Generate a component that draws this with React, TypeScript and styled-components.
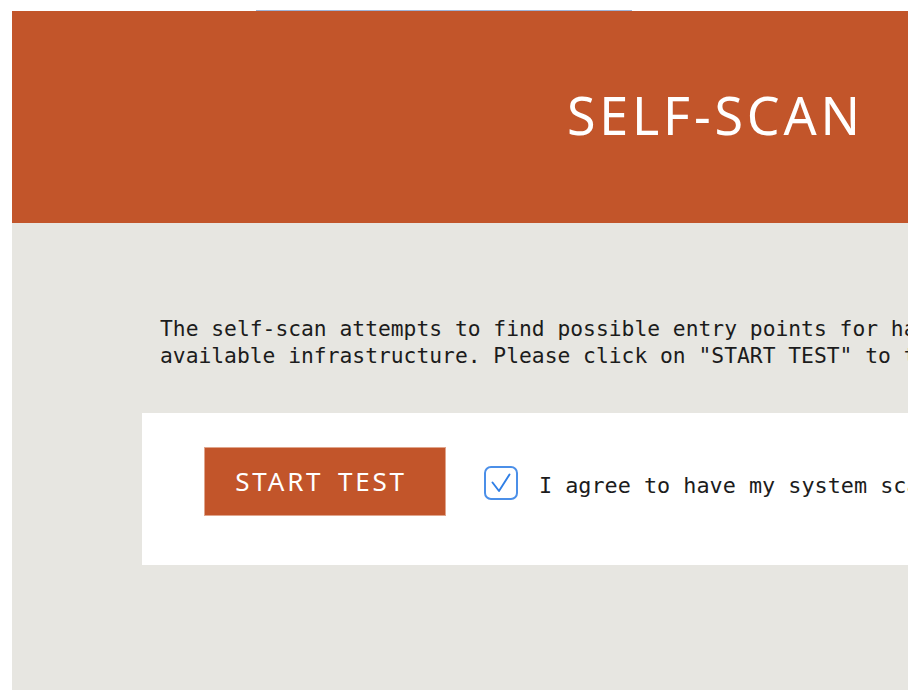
import React from "react";
import styled, { createGlobalStyle } from "styled-components";

const Global = createGlobalStyle`
  html, body { margin: 0; padding: 0; background: #ffffff; overflow: hidden; }
  body { font-family: "DejaVu Sans Mono", monospace; }
`;

const Page = styled.div`
  padding: 10px 0 0 12px;
  width: 1300px;
  height: 690px;
  box-sizing: border-box;
  display: flex;
  flex-direction: column;
`;

const TopRule = styled.div`
  margin-left: 244px;
  width: 376px;
  height: 1px;
  background: #9fb3d6;
`;

const Header = styled.header`
  height: 212px;
  background: #c2552a;
  display: flex;
  align-items: center;
  padding-left: 555px;
`;

const Title = styled.h1`
  margin: 0;
  margin-top: -6px;
  color: #ffffff;
  font-family: "Noto Sans", "Open Sans", sans-serif;
  font-weight: 400;
  font-size: 52px;
  letter-spacing: 3.8px;
`;

const Main = styled.main`
  flex: 1;
  background: #e7e6e1;
  padding: 92px 0 0 130px;
`;

const Intro = styled.p`
  margin: 0 0 44px 18px;
  font-family: "DejaVu Sans Mono", monospace;
  font-size: 21.3px;
  line-height: 27px;
  color: #1c1c1c;
  white-space: nowrap;
`;

const Card = styled.section`
  background: #ffffff;
  height: 152px;
  box-sizing: border-box;
  padding: 34px 0 0 62px;
  display: flex;
  align-items: flex-start;
`;

const StartButton = styled.button`
  width: 242px;
  height: 69px;
  background: #c2552a;
  border: 1px solid #e0a58c;
  color: #ffffff;
  font-family: "Noto Sans", "Open Sans", sans-serif;
  font-size: 26px;
  letter-spacing: 2.8px;
  word-spacing: 5px;
  cursor: pointer;
  padding: 0 8px 2px 0;
`;

const Agree = styled.label`
  display: flex;
  align-items: center;
  gap: 21px;
  margin-left: 38px;
  height: 69px;
  padding-top: 3px;
  box-sizing: border-box;
`;

const Box = styled.span`
  width: 34px;
  height: 34px;
  box-sizing: border-box;
  border: 2px solid #4b8fe8;
  border-radius: 7px;
  display: flex;
  align-items: center;
  justify-content: center;
  background: #ffffff;
`;

const LabelText = styled.span`
  font-family: "DejaVu Sans Mono", monospace;
  font-size: 21.8px;
  color: #1c1c1c;
  white-space: nowrap;
  padding-top: 4px;
`;

export default function App() {
  return (
    <>
      <Global />
      <Page>
        <TopRule />
        <Header>
          <Title>SELF-SCAN</Title>
        </Header>
        <Main>
          <Intro>
            The self-scan attempts to find possible entry points for hackers in your
            <br />
            available infrastructure. Please click on "START TEST" to test your system.
          </Intro>
          <Card>
            <StartButton>START TEST</StartButton>
            <Agree>
              <Box>
                <svg width="30" height="30" viewBox="0 0 30 30" fill="none">
                  <path d="M6.5 14.5 L13 23 L23.5 6.5" stroke="#2f7fe6" strokeWidth="1.9" strokeLinecap="round" strokeLinejoin="round" />
                </svg>
              </Box>
              <LabelText>I agree to have my system scanned.</LabelText>
            </Agree>
          </Card>
        </Main>
      </Page>
    </>
  );
}
